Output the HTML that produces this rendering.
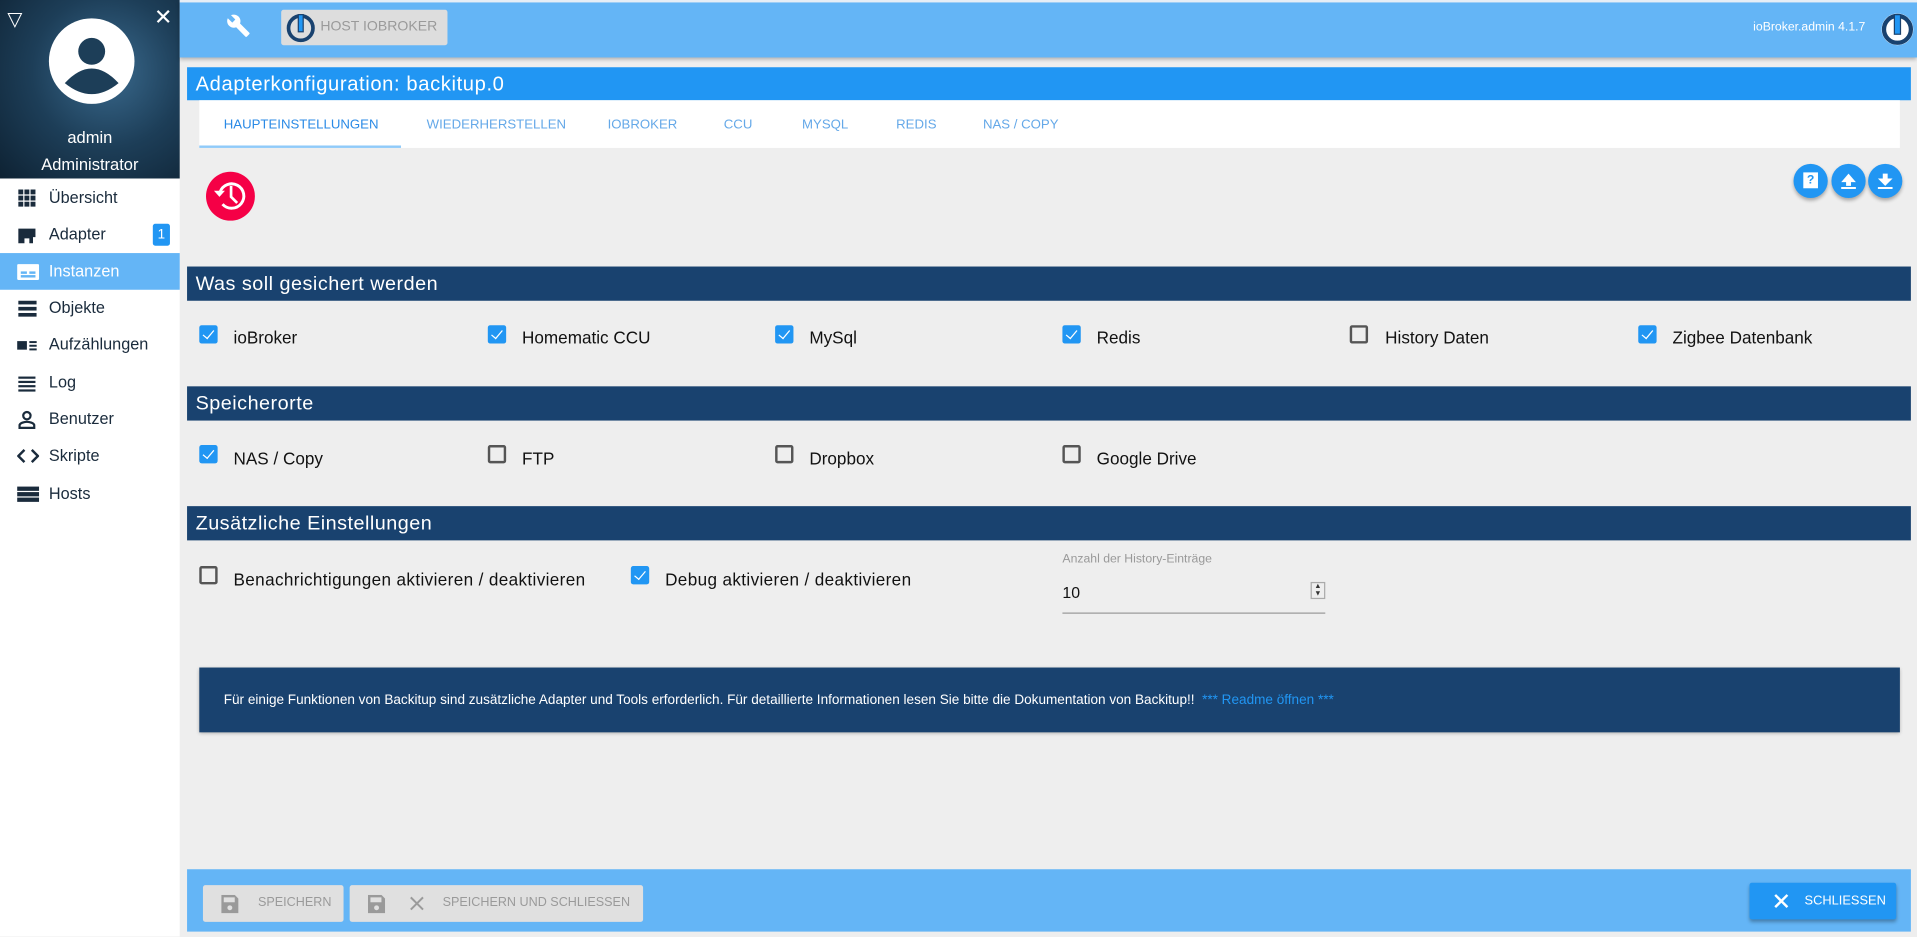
<!DOCTYPE html>
<html><head><meta charset="utf-8"><style>
*{box-sizing:border-box;margin:0;padding:0}
html,body{width:1917px;height:936px;overflow:hidden;background:#eee}
#w{position:absolute;left:0;top:0;width:1568px;height:766px;transform:scale(1.22258);transform-origin:0 0;font-family:"Liberation Sans",sans-serif;background:#eee}
.a{position:absolute}
.side{left:0;top:0;width:147px;height:766px;background:#fff}
.hdr{left:0;top:0;width:147px;height:146px;background:radial-gradient(circle at 60% 40%,#3a6a8e 0,#1d3e58 50%,#0e2233 100%)}
.mi{position:absolute;left:0;width:147px;height:30px;font-size:13.3px;color:#1a2b3c;line-height:30px;padding-left:40px}
.mi svg{position:absolute;left:14px;top:7px}
.sec{left:153px;width:1410px;height:28px;background:#19426f;color:#fff;font-size:16.2px;line-height:29px;padding-left:7px;letter-spacing:.4px}
.cb{position:absolute;width:15px;height:15px;border-radius:2px}
.on{background:#2196f3}
.on:after{content:"";position:absolute;left:5px;top:2px;width:4px;height:8px;border:solid #fff;border-width:0 1.6px 1.6px 0;transform:rotate(40deg)}
.off{border:2px solid #555}
.lb{position:absolute;font-size:14px;color:#111}
.tab{position:absolute;top:82px;height:39px;line-height:40px;font-size:10.8px;color:#64a8e8}
.rb{position:absolute;top:134px;width:28px;height:28px;border-radius:50%;background:#2196f3;box-shadow:0 2px 3px rgba(0,0,0,.3)}
.btn{position:absolute;background:#e0e0e0;border-radius:2px;color:#9a9a9a;font-size:10.3px;line-height:30px}
</style></head><body><div id="w">
<div class="a side"></div>
<div class="a hdr"></div>
<div class="a" style="left:6px;top:6px;color:#fff;font-size:16px">▽</div>
<div class="a" style="left:126px;top:4px;color:#fff;font-size:18px">✕</div>
<svg class="a" style="left:39px;top:14px" width="72" height="72" viewBox="0 0 72 72"><circle cx="36" cy="36" r="35" fill="#fff"/><circle cx="36" cy="28" r="11" fill="#1d3e58"/><path d="M14 54 Q36 30 58 54 Q36 72 14 54Z" fill="#1d3e58"/></svg>
<div class="a" style="left:0;width:147px;top:105px;text-align:center;color:#fff;font-size:13.5px">admin</div>
<div class="a" style="left:0;width:147px;top:127px;text-align:center;color:#fff;font-size:13.5px">Administrator</div>
<div class="mi" style="top:147px"><svg width="16" height="16"><g fill="#1a2b3c"><rect x="1" y="1" width="4" height="4"/><rect x="6" y="1" width="4" height="4"/><rect x="11" y="1" width="4" height="4"/><rect x="1" y="6" width="4" height="4"/><rect x="6" y="6" width="4" height="4"/><rect x="11" y="6" width="4" height="4"/><rect x="1" y="11" width="4" height="4"/><rect x="6" y="11" width="4" height="4"/><rect x="11" y="11" width="4" height="4"/></g></svg>Übersicht</div>
<div class="mi" style="top:177px"><svg width="16" height="16"><path d="M1 3h14v3H1zM1 6h14v4h-2v5h-3v-4H6v4H1z" fill="#1a2b3c"/></svg>Adapter<span class="a" style="left:125px;top:6px;width:14px;height:18px;background:#2196f3;border-radius:2px;color:#fff;font-size:11px;line-height:18px;text-align:center">1</span></div>
<div class="mi" style="top:207px;background:#64b5f6;color:#fff"><svg width="18" height="16"><rect x="0" y="2" width="18" height="13" rx="1" fill="#fff"/><rect x="3" y="8" width="5" height="2" fill="#64b5f6"/><rect x="10" y="8" width="5" height="2" fill="#64b5f6"/><rect x="3" y="11" width="12" height="2" fill="#64b5f6"/></svg>Instanzen</div>
<div class="mi" style="top:237px"><svg width="16" height="16"><rect x="1" y="2" width="15" height="3" fill="#1a2b3c"/><rect x="1" y="7" width="15" height="3" fill="#1a2b3c"/><rect x="1" y="12" width="15" height="3" fill="#1a2b3c"/></svg>Objekte</div>
<div class="mi" style="top:267px"><svg width="18" height="16"><rect x="0" y="5" width="8" height="7" fill="#1a2b3c"/><rect x="10" y="5" width="6" height="1.6" fill="#1a2b3c"/><rect x="10" y="8" width="6" height="1.6" fill="#1a2b3c"/><rect x="10" y="11" width="6" height="1.6" fill="#1a2b3c"/></svg>Aufzählungen</div>
<div class="mi" style="top:298px"><svg width="16" height="16"><g fill="#1a2b3c"><rect x="1" y="3" width="14" height="1.8"/><rect x="1" y="6.5" width="14" height="1.8"/><rect x="1" y="10" width="14" height="1.8"/><rect x="1" y="13.5" width="14" height="1.8"/></g></svg>Log</div>
<div class="mi" style="top:328px"><svg width="16" height="16"><circle cx="8" cy="5" r="3" fill="none" stroke="#1a2b3c" stroke-width="1.8"/><path d="M2 15v-2c0-2 4-3 6-3s6 1 6 3v2z" fill="none" stroke="#1a2b3c" stroke-width="1.8"/></svg>Benutzer</div>
<div class="mi" style="top:358px"><svg width="18" height="16"><path d="M6 3L1 8l5 5M12 3l5 5-5 5" fill="none" stroke="#1a2b3c" stroke-width="2"/></svg>Skripte</div>
<div class="mi" style="top:389px"><svg width="18" height="16"><g fill="#1a2b3c"><rect x="0" y="2" width="18" height="3.5"/><rect x="0" y="6.5" width="18" height="3.5"/><rect x="0" y="11" width="18" height="3.5"/></g></svg>Hosts</div>

<div class="a" style="left:147px;top:0;width:1421px;height:47px;background:#64b5f6;box-shadow:0 2px 3px rgba(0,0,0,.25)"></div>
<div class="a" style="left:147px;top:0;width:1421px;height:2px;background:#e6eef6"></div>
<svg class="a" style="left:185px;top:11px" width="20" height="20" viewBox="0 0 24 24"><path d="M22.7 19l-9.1-9.1c.9-2.3.4-5-1.5-6.9-2-2-5-2.4-7.4-1.3L9 6 6 9 1.6 4.7C.4 7.1.9 10.1 2.9 12.1c1.9 1.9 4.6 2.4 6.9 1.5l9.1 9.1c.4.4 1 .4 1.4 0l2.3-2.3c.5-.4.5-1.1.1-1.4z" fill="#fff"/></svg>
<div class="a" style="left:230px;top:8px;width:136px;height:29px;background:#ddd;border-radius:2px"></div>
<svg class="a" style="left:234px;top:11px" width="24" height="24"><circle cx="12" cy="12" r="10" fill="none" stroke="#19426f" stroke-width="3"/><rect x="10" y="1" width="4" height="14" fill="#2196f3" stroke="#19426f" stroke-width="1"/></svg>
<div class="a" style="left:262px;top:16px;font-size:11.5px;color:#9a9a9a">HOST IOBROKER</div>
<div class="a" style="left:1434px;top:17px;font-size:10px;color:#fff">ioBroker.admin 4.1.7</div>
<svg class="a" style="left:1538px;top:10px" width="28" height="28"><circle cx="14" cy="14" r="13" fill="#fff"/><circle cx="14" cy="14" r="11" fill="none" stroke="#19426f" stroke-width="3.5"/><rect x="11.5" y="2" width="5" height="16" fill="#2196f3" stroke="#19426f" stroke-width="1"/></svg>

<div class="a" style="left:153px;top:55px;width:1410px;height:27px;background:#2196f3;color:#fff;font-size:16.5px;line-height:29px;padding-left:7px;letter-spacing:.5px">Adapterkonfiguration: backitup.0</div>
<div class="a" style="left:163px;top:82px;width:1391px;height:39px;background:#fff"></div>
<div class="a" style="left:163px;top:119px;width:165px;height:2px;background:#90caf9"></div>
<div class="tab" style="left:183px;color:#2a8ae6">HAUPTEINSTELLUNGEN</div>
<div class="tab" style="left:349px">WIEDERHERSTELLEN</div>
<div class="tab" style="left:497px">IOBROKER</div>
<div class="tab" style="left:592px">CCU</div>
<div class="tab" style="left:656px">MYSQL</div>
<div class="tab" style="left:733px">REDIS</div>
<div class="tab" style="left:804px">NAS / COPY</div>

<svg class="a" style="left:168px;top:140px" width="41" height="41" viewBox="0 0 41 41"><circle cx="20.5" cy="20.5" r="20" fill="#f50046"/><path d="M12 17 A10 10 0 1 1 14 27" fill="none" stroke="#fff" stroke-width="2.4"/><path d="M7 16h9l-4.5 5z" fill="#fff"/><path d="M21 12v9l5 5" fill="none" stroke="#fff" stroke-width="2.2"/></svg>
<div class="rb" style="left:1467px"><div class="a" style="left:8px;top:7px;width:12px;height:13px;background:#fff;color:#2196f3;font-size:10px;font-weight:bold;text-align:center;line-height:13px">?</div></div>
<div class="rb" style="left:1498px"><svg class="a" style="left:7px;top:7px" width="14" height="14"><path d="M7 1L1 8h4v3h4V8h4z M1 12h12v1.6H1z" fill="#fff"/></svg></div>
<div class="rb" style="left:1528px"><svg class="a" style="left:7px;top:7px" width="14" height="14"><path d="M5 1h4v4h4l-6 6-6-6h4z M1 12h12v1.6H1z" fill="#fff"/></svg></div>

<div class="a sec" style="top:218px">Was soll gesichert werden</div>
<div class="cb on" style="left:163px;top:266px"></div><div class="lb" style="left:191px;top:268px">ioBroker</div>
<div class="cb on" style="left:399px;top:266px"></div><div class="lb" style="left:427px;top:268px">Homematic CCU</div>
<div class="cb on" style="left:634px;top:266px"></div><div class="lb" style="left:662px;top:268px">MySql</div>
<div class="cb on" style="left:869px;top:266px"></div><div class="lb" style="left:897px;top:268px">Redis</div>
<div class="cb off" style="left:1104px;top:266px"></div><div class="lb" style="left:1133px;top:268px">History Daten</div>
<div class="cb on" style="left:1340px;top:266px"></div><div class="lb" style="left:1368px;top:268px">Zigbee Datenbank</div>

<div class="a sec" style="top:316px">Speicherorte</div>
<div class="cb on" style="left:163px;top:364px"></div><div class="lb" style="left:191px;top:367px">NAS / Copy</div>
<div class="cb off" style="left:399px;top:364px"></div><div class="lb" style="left:427px;top:367px">FTP</div>
<div class="cb off" style="left:634px;top:364px"></div><div class="lb" style="left:662px;top:367px">Dropbox</div>
<div class="cb off" style="left:869px;top:364px"></div><div class="lb" style="left:897px;top:367px">Google Drive</div>

<div class="a sec" style="top:414px">Zusätzliche Einstellungen</div>
<div class="cb off" style="left:163px;top:463px"></div><div class="lb" style="left:191px;top:466px;letter-spacing:.3px">Benachrichtigungen aktivieren / deaktivieren</div>
<div class="cb on" style="left:516px;top:463px"></div><div class="lb" style="left:544px;top:466px;letter-spacing:.3px">Debug aktivieren / deaktivieren</div>
<div class="a" style="left:869px;top:452px;font-size:10px;color:#999">Anzahl der History-Einträge</div>
<div class="a" style="left:869px;top:477px;font-size:13px;color:#111">10</div>
<div class="a" style="left:1072px;top:476px;width:12px;height:14px;border:1px solid #aaa;background:#eee;font-size:6px;line-height:6px;text-align:center;color:#333">▲<br>▼</div>
<div class="a" style="left:869px;top:501px;width:215px;height:1px;background:#999"></div>

<div class="a" style="left:163px;top:546px;width:1391px;height:53px;background:#19426f;box-shadow:0 1px 3px rgba(0,0,0,.3);color:#fff;font-size:11.1px;line-height:55px;padding-left:20px">Für einige Funktionen von Backitup sind zusätzliche Adapter und Tools erforderlich. Für detaillierte Informationen lesen Sie bitte die Dokumentation von Backitup!! &nbsp;<span style="color:#2196f3">*** Readme öffnen ***</span></div>

<div class="a" style="left:153px;top:711px;width:1410px;height:51px;background:#64b5f6"></div>
<div class="btn" style="left:166px;top:724px;width:115px;height:30px"><svg class="a" style="left:15px;top:8px" width="14" height="15"><path d="M0 0h11l3 3v12H0z" fill="#9a9a9a"/><rect x="2" y="2" width="9" height="4" fill="#e0e0e0"/><circle cx="7" cy="10.5" r="2" fill="#e0e0e0"/></svg><span class="a" style="left:45px">SPEICHERN</span></div>
<div class="btn" style="left:286px;top:724px;width:240px;height:30px"><svg class="a" style="left:15px;top:8px" width="14" height="15"><path d="M0 0h11l3 3v12H0z" fill="#9a9a9a"/><rect x="2" y="2" width="9" height="4" fill="#e0e0e0"/><circle cx="7" cy="10.5" r="2" fill="#e0e0e0"/></svg><svg class="a" style="left:49px;top:9px" width="12" height="12"><path d="M1 1l10 10M11 1L1 11" stroke="#9a9a9a" stroke-width="1.6"/></svg><span class="a" style="left:76px">SPEICHERN UND SCHLIESSEN</span></div>
<div class="a" style="left:1431px;top:722px;width:120px;height:30px;background:#2196f3;border-radius:2px;box-shadow:0 2px 3px rgba(0,0,0,.3)"><svg class="a" style="left:20px;top:9px" width="12" height="12"><path d="M1 1l10 10M11 1L1 11" stroke="#fff" stroke-width="2"/></svg><span class="a" style="left:45px;top:0;line-height:30px;color:#fff;font-size:10.5px">SCHLIESSEN</span></div>
</div></body></html>
